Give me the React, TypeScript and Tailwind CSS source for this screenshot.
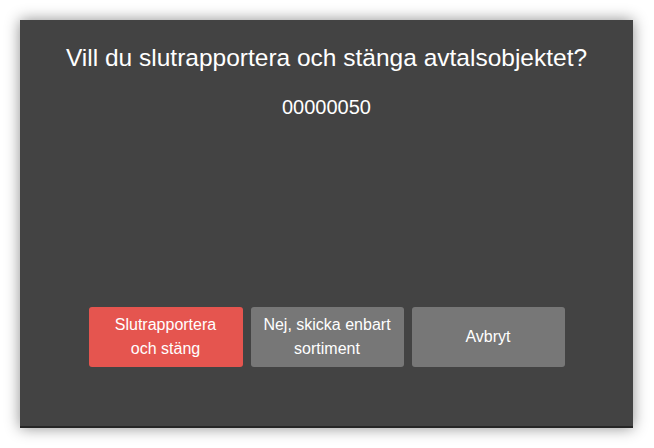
export default function App() {
  return (
    <main className="h-[448px] w-[654px] bg-white pl-[20px] pt-[20px] font-['Liberation_Sans',Arial,sans-serif]">
      <section className="flex h-[408px] w-[613px] flex-col items-center border-b-2 border-[#262626] bg-[#434343] pb-[59px] pt-[24px] text-white shadow-[0_0_14px_rgba(0,0,0,0.45)]">
        <h1 className="text-[24.5px] leading-[28px]">
          Vill du slutrapportera och stänga avtalsobjektet?
        </h1>
        <p className="mt-[23px] text-[20px] leading-[24px]">00000050</p>
        <div className="mt-auto flex gap-[8px]">
          <button className="flex h-[60px] w-[154px] items-center justify-center rounded-[3px] bg-[#e5554f] text-[16px] leading-[24px] text-white">
            Slutrapportera
            <br />
            och stäng
          </button>
          <button className="flex h-[60px] w-[153px] items-center justify-center rounded-[3px] bg-[#777777] text-[16px] leading-[24px] text-white">
            Nej, skicka enbart
            <br />
            sortiment
          </button>
          <button className="flex h-[60px] w-[153px] items-center justify-center rounded-[3px] bg-[#777777] text-[16px] leading-[24px] text-white">
            Avbryt
          </button>
        </div>
      </section>
    </main>
  );
}
